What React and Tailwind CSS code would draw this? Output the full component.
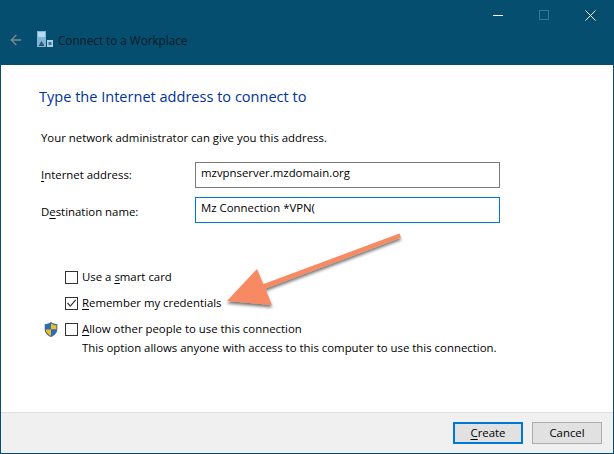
import { ArrowLeft } from 'lucide-react';

function Underlined({ children }) {
  return <span className="underline underline-offset-2 decoration-1">{children}</span>;
}

function Checkbox({ checked }) {
  return (
    <div className="w-[13px] h-[13px] shrink-0 border border-[#333333] bg-white flex items-center justify-center">
      {checked && (
        <svg width="11" height="11" viewBox="0 0 11 11" fill="none" stroke="#333333" strokeWidth="1.2">
          <path d="M1.5 5 L4.3 8.2 L9.7 1.8" />
        </svg>
      )}
    </div>
  );
}

function Shield() {
  return (
    <svg width="14" height="17" viewBox="0 0 16 18">
      <path d="M8 0.5 C6 2 3 3 0.8 3 V9 C0.8 13 4 16 8 17.5 C12 16 15.2 13 15.2 9 V3 C13 3 10 2 8 0.5 Z" fill="#4a6b8f" />
      <path d="M8 2 C6.4 3.1 4 4 2 4.2 V9 H8 Z" fill="#1f6fc4" />
      <path d="M8 2 C9.6 3.1 12 4 14 4.2 V9 H8 Z" fill="#f6bb1f" />
      <path d="M2 9 H8 V16 C4.8 14.8 2 12.4 2 9 Z" fill="#f6bb1f" />
      <path d="M14 9 H8 V16 C11.2 14.8 14 12.4 14 9 Z" fill="#1f6fc4" />
    </svg>
  );
}

function WorkplaceIcon() {
  return (
    <svg width="17" height="17" viewBox="0 0 17 17">
      <rect x="0" y="0" width="9" height="16" fill="#7fb6d8" />
      <rect x="1" y="1" width="7" height="5" fill="#b9d9ec" />
      <path d="M1.5 15 L4.5 10 L7.5 15 Z" fill="#33536e" />
      <rect x="10" y="9" width="6" height="7" fill="#a8cfe6" />
      <rect x="11.5" y="11" width="3" height="3" fill="#3f6f94" />
    </svg>
  );
}

function Arrow() {
  return (
    <svg className="absolute left-0 top-0 pointer-events-none" width="614" height="454" viewBox="0 0 614 454">
      <defs>
        <filter id="arrowShadow" x="-10%" y="-10%" width="120%" height="130%">
          <feDropShadow dx="0" dy="2.5" stdDeviation="1.5" floodColor="#000000" floodOpacity="0.55" />
        </filter>
      </defs>
      <g filter="url(#arrowShadow)" fill="#f88a64">
        <path d="M399.5 233.5 L401 237.5 L263 289.5 L261 285 Z" />
        <path d="M227 301 L257 269 L272 305 Z" />
      </g>
    </svg>
  );
}

export default function App() {
  return (
    <div className="relative w-[614px] h-[454px] flex flex-col bg-[#064e6f] px-px pb-px font-['Open_Sans','Noto_Sans',sans-serif] text-[11.4px] text-black overflow-hidden">
      <div className="h-[65px] shrink-0 flex flex-col">
        <div className="h-[30px] flex items-center justify-end">
          <div className="w-[46px] flex justify-center">
            <div className="w-[10px] h-px bg-white" />
          </div>
          <div className="w-[46px] flex justify-center">
            <div className="w-[10px] h-[10px] border border-[#3b7491]" />
          </div>
          <div className="w-[46px] flex justify-center">
            <svg width="11" height="11" viewBox="0 0 11 11" stroke="#ffffff" strokeWidth="1">
              <path d="M0.5 0.5 L10.5 10.5 M10.5 0.5 L0.5 10.5" />
            </svg>
          </div>
        </div>
        <div className="flex items-center pl-[7px] pt-[1px]">
          <ArrowLeft size={16} color="#7d8b93" strokeWidth={2} />
          <div className="ml-[13px]"><WorkplaceIcon /></div>
          <span className="ml-[4px] text-[#0a1a24] text-[11.7px] leading-[16px]">Connect to a Workplace</span>
        </div>
      </div>

      <div className="flex-1 bg-white flex flex-col pl-[38px] pt-[21px]">
        <h1 className="text-[14.55px] leading-[20px] text-[#003399] font-normal">Type the Internet address to connect to</h1>

        <p className="mt-[23px] ml-[2px] leading-[18px]">Your network administrator can give you this address.</p>

        <div className="mt-[15px] ml-[2px] flex items-center">
          <label className="w-[154px] leading-[18px]"><Underlined>I</Underlined>nternet address:</label>
          <div className="w-[305px] h-[26px] border border-[#7a7a7a] pl-[5px] leading-[20px]">mzvpnserver.mzdomain.org</div>
        </div>
        <div className="mt-[9px] ml-[2px] flex items-center">
          <label className="w-[154px] leading-[18px] pt-[3px]">D<Underlined>e</Underlined>stination name:</label>
          <div className="w-[305px] h-[26px] border border-[#0078d7] pl-[5px] leading-[20px]">Mz Connection *VPN(</div>
        </div>

        <div className="mt-[45px] ml-[26px] flex items-center gap-[4px] h-[18px]">
          <Checkbox />
          <span>Use a <Underlined>s</Underlined>mart card</span>
        </div>
        <div className="mt-[8px] ml-[26px] flex items-center gap-[4px] h-[18px]">
          <Checkbox checked />
          <span><Underlined>R</Underlined>emember my credentials</span>
        </div>
        <div className="mt-[8px] ml-[5px] flex items-center h-[18px]">
          <Shield />
          <div className="ml-[7px]"><Checkbox /></div>
          <span className="ml-[4px]"><Underlined>A</Underlined>llow other people to use this connection</span>
        </div>
        <p className="ml-[43px] mt-px leading-[18px]">This option allows anyone with access to this computer to use this connection.</p>
      </div>

      <div className="h-[41px] shrink-0 bg-[#f0f0f0] border-t border-[#dfdfdf] flex items-start justify-end gap-[9px] pt-[9px] pr-[11px]">
        <button className="w-[70px] h-[22px] bg-[#e1e1e1] border-2 border-[#0078d7] flex items-center justify-center leading-none">
          <span><Underlined>C</Underlined>reate</span>
        </button>
        <button className="w-[70px] h-[22px] bg-[#e1e1e1] border border-[#adadad] flex items-center justify-center leading-none">
          Cancel
        </button>
      </div>

      <Arrow />
    </div>
  );
}
